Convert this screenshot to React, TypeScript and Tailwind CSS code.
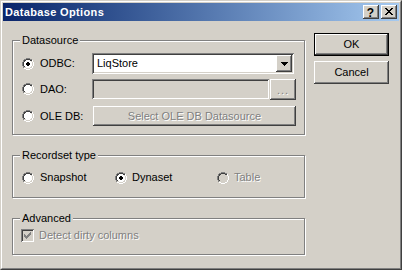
import React from 'react'

// classic win2k colours
// face #d4d0c8, shadow #808080, dark #404040

const FONT = { fontFamily: '"Liberation Sans", Arial, sans-serif' }

const Pix = ({ rows, colors }: { rows: string[]; colors: Record<string, string> }) => {
    const rects: React.ReactNode[] = []
    rows.forEach((row, y) => {
        row.split('').forEach((ch, x) => {
            const fill = colors[ch]
            if (fill) rects.push(<rect key={`${x}-${y}`} x={x} y={y} width={1} height={1} fill={fill} />)
        })
    })
    return (
        <svg width={rows[0].length} height={rows.length} shapeRendering="crispEdges" className="block shrink-0">
            {rects}
        </svg>
    )
}

const RADIO = [
    '....GGGG....',
    '..GGDDDDGG..',
    '.GDDffffDDW.',
    '.GDffffffLW.',
    'GDffffffffLW',
    'GDffffffffLW',
    'GDffffffffLW',
    'GDffffffffLW',
    '.GDffffffLW.',
    '.GLLffffLLW.',
    '..WWLLLLWW..',
    '....WWWW....',
]

const Radio = ({ checked = false, disabled = false }: { checked?: boolean; disabled?: boolean }) => {
    // dot sits at rows 4-7, cols 4-7
    const rows = RADIO.map((r, y) =>
        r.split('').map((ch, x) => {
            const inDot =
                (y === 4 && (x === 5 || x === 6)) ||
                ((y === 5 || y === 6) && x >= 4 && x <= 7) ||
                (y === 7 && (x === 5 || x === 6))
            if (checked && inDot) return 'X'
            return ch
        }).join('')
    )
    return (
        <Pix
            rows={rows}
            colors={{ G: '#808080', D: '#404040', L: '#d4d0c8', W: '#ffffff', f: disabled ? '#d4d0c8' : '#ffffff', X: '#000000' }}
        />
    )
}

const CHECK = [
    '......X',
    '.....XX',
    'X...XXX',
    'XX.XXX.',
    'XXXXX..',
    '.XXX...',
    '..X....',
]

const CLOSE = [
    'XX....XX',
    '.XX..XX.',
    '..XXXX..',
    '...XX...',
    '..XXXX..',
    '.XX..XX.',
    'XX....XX',
]

const ARROW = [
    'XXXXXXX',
    '.XXXXX.',
    '..XXX..',
    '...X...',
]

const raised = 'shadow-[inset_-1px_-1px_0_#404040,inset_1px_1px_0_#ffffff,inset_-2px_-2px_0_#808080]'
const sunken = 'shadow-[inset_1px_1px_0_#808080,inset_-1px_-1px_0_#ffffff,inset_2px_2px_0_#404040,inset_-2px_-2px_0_#d4d0c8]'
const grayText = 'text-[#808080] [text-shadow:1px_1px_0_#ffffff]'

const Group = ({ label, className, children }: { label: string; className: string; children?: React.ReactNode }) => (
    <div className={`relative border border-[#808080] shadow-[inset_1px_1px_0_#ffffff,1px_1px_0_#ffffff] ${className}`}>
        <span className="absolute left-[7px] top-[-7px] bg-[#d4d0c8] px-[2px] leading-[13px]">{label}</span>
        {children}
    </div>
)

const App = () => {
    return (
        <div style={FONT} className="w-[402px] h-[270px] text-[11px] leading-[13px] text-black select-none">
            <div className="flex h-full flex-col border border-t-[#d4d0c8] border-l-[#d4d0c8] border-b-[#404040] border-r-[#404040]">
                <div className="flex flex-1 flex-col border border-t-white border-l-white border-b-[#808080] border-r-[#808080] bg-[#d4d0c8] p-[1px]">

                    {/* caption */}
                    <div className="flex h-[18px] items-center bg-gradient-to-r from-[#0a246a] to-[#a6caf0] px-[2px]">
                        <span className="font-bold text-white tracking-[0.35px]">Database Options</span>
                        <div className="ml-auto flex gap-[2px]">
                            <div className={`flex h-[14px] w-[16px] items-center justify-center bg-[#d4d0c8] ${raised}`}>
                                <span className="font-bold text-[12px] leading-[12px] mt-[1px] ml-[-1px]">?</span>
                            </div>
                            <div className={`flex h-[14px] w-[16px] items-start bg-[#d4d0c8] pl-[4px] pt-[3px] ${raised}`}>
                                <Pix rows={CLOSE} colors={{ X: '#000000' }} />
                            </div>
                        </div>
                    </div>

                    {/* body */}
                    <div className="flex flex-1">
                        <div className="ml-[9px] flex w-[293px] flex-col">

                            <Group label="Datasource" className="mt-[19px] h-[95px]">
                                <div className="mt-[12px] flex h-[21px] items-center pl-[9px]">
                                    <div className="flex w-[70px] items-center gap-[6px]">
                                        <Radio checked />
                                        <span>ODBC:</span>
                                    </div>
                                    <div className={`flex h-[21px] w-[202px] items-center bg-white p-[2px] ${sunken}`}>
                                        <span className="flex-1 pl-[3px]">LiqStore</span>
                                        <div className={`flex h-[17px] w-[16px] items-center justify-center bg-[#d4d0c8] ${raised}`}>
                                            <Pix rows={ARROW} colors={{ X: '#000000' }} />
                                        </div>
                                    </div>
                                </div>

                                <div className="mt-[5px] flex h-[20px] items-center pl-[9px]">
                                    <div className="flex w-[70px] items-center gap-[6px]">
                                        <Radio />
                                        <span>DAO:</span>
                                    </div>
                                    <div className={`h-[20px] w-[177px] bg-[#d4d0c8] ${sunken}`} />
                                    <div className={`ml-[1px] flex h-[21px] w-[26px] items-center justify-center bg-[#d4d0c8] ${raised}`}>
                                        <span className={`${grayText} tracking-[1px] leading-[10px] mt-[2px]`}>...</span>
                                    </div>
                                </div>

                                <div className="mt-[7px] flex h-[20px] items-center pl-[9px]">
                                    <div className="flex w-[70px] items-center gap-[6px]">
                                        <Radio />
                                        <span>OLE DB:</span>
                                    </div>
                                    <div className={`ml-[1px] flex h-[20px] w-[203px] items-center justify-center bg-[#d4d0c8] ${raised}`}>
                                        <span className={grayText}>Select OLE DB Datasource</span>
                                    </div>
                                </div>
                            </Group>

                            <Group label="Recordset type" className="mt-[20px] h-[43px]">
                                <div className="mt-[15px] flex h-[13px] items-center pl-[9px]">
                                    <div className="flex w-[93px] items-center gap-[6px]">
                                        <Radio />
                                        <span>Snapshot</span>
                                    </div>
                                    <div className="flex w-[102px] items-center gap-[5px]">
                                        <Radio checked />
                                        <span>Dynaset</span>
                                    </div>
                                    <div className="flex items-center gap-[5px]">
                                        <Radio disabled />
                                        <span className={grayText}>Table</span>
                                    </div>
                                </div>
                            </Group>

                            <Group label="Advanced" className="mt-[20px] h-[37px]">
                                <div className="mt-[10px] flex h-[13px] items-center pl-[8px]">
                                    <div className={`h-[13px] w-[13px] bg-[#d4d0c8] pl-[3px] pt-[3px] ${sunken}`}>
                                        <Pix rows={CHECK} colors={{ X: '#808080' }} />
                                    </div>
                                    <span className={`ml-[5px] ${grayText}`}>Detect dirty columns</span>
                                </div>
                            </Group>
                        </div>

                        <div className="ml-[9px] mt-[12px] flex flex-col gap-[5px]">
                            <div className="h-[23px] w-[75px] border border-black">
                                <div className={`flex h-full items-center justify-center ${raised}`}>OK</div>
                            </div>
                            <div className={`flex h-[23px] w-[75px] items-center justify-center ${raised}`}>Cancel</div>
                        </div>
                    </div>
                </div>
            </div>
        </div>
    )
}

export default App
